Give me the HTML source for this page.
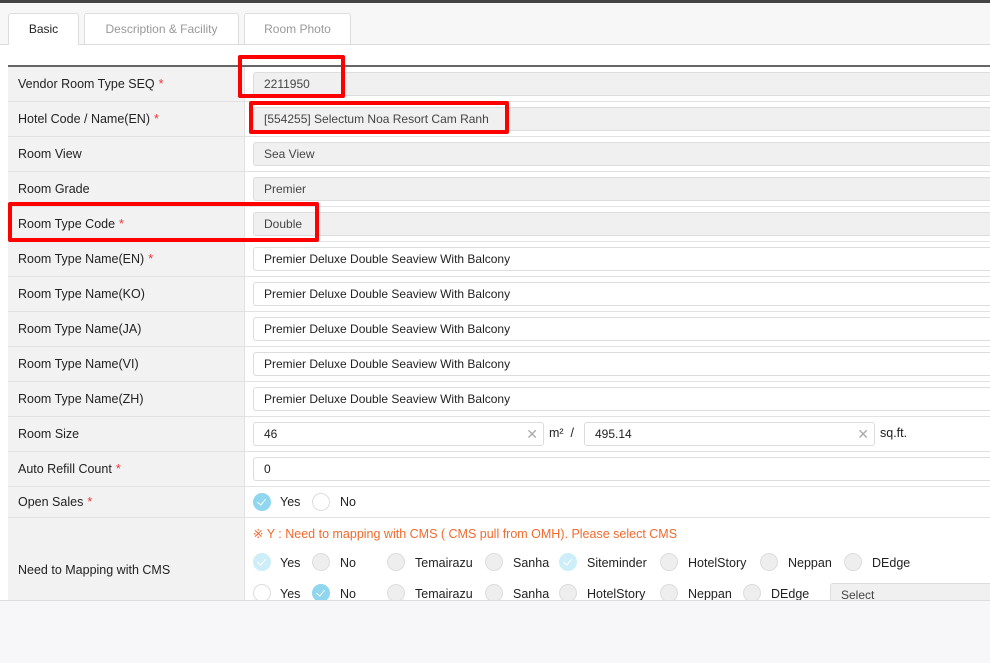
<!DOCTYPE html><html><head><style>
body{margin:0;width:990px;height:662px;overflow:hidden;background:#f7f7f9;font-family:"Liberation Sans",sans-serif;font-size:12.5px;color:#222;position:relative}
.top{position:absolute;left:0;top:0;width:990px;height:3px;background:#444}
.hdr{position:absolute;left:0;top:3px;width:990px;height:41px;background:#f7f7f7;border-bottom:1px solid #ddd}
.tab{position:absolute;top:13px;height:31px;border:1px solid #ddd;border-bottom:none;border-radius:3px 3px 0 0;background:#fff;text-align:center;line-height:30px;color:#999;font-size:12px;box-sizing:border-box}
.main{position:absolute;left:0;top:45px;width:990px;height:555px;background:#fff}
.tbl{position:absolute;left:8px;top:65px;width:982px;border-top:2px solid #666}
.row{position:relative;height:34px;border-bottom:1px solid #e2e2e2}
.lab{position:absolute;left:0;top:0;bottom:0;width:237px;background:#f2f2f2;border-right:1px solid #e2e2e2;padding-left:10px;box-sizing:border-box;display:flex;align-items:center;font-size:12.5px}
.req{color:#e33;margin-left:4px}
.inp{position:absolute;left:245px;top:5px;height:24px;right:-5px;border:1px solid #ddd;border-radius:3px;box-sizing:border-box;padding-left:10px;line-height:22px;font-size:12px;color:#222;background:#fff}
.ro{background:#f0f0f0;color:#444}
.rad{position:absolute;width:18px;height:18px;border-radius:50%;border:1px solid #ddd;box-sizing:border-box;background:#fff}
.on{background:#8fd6ee;border-color:#8fd6ee}
.on::after{content:"";position:absolute;left:5px;top:3px;width:4px;height:7px;border:solid #fff;border-width:0 1.5px 1.5px 0;transform:rotate(40deg)}
.dis{background:#eee}
.don{background:#cdeef8;border-color:#cdeef8}
.don::after{content:"";position:absolute;left:5px;top:3px;width:4px;height:7px;border:solid #fff;border-width:0 1.5px 1.5px 0;transform:rotate(40deg)}
.t{position:absolute;font-size:12.5px;color:#222}
.red{position:absolute;border:4px solid #f00;box-sizing:border-box;border-radius:2px}
</style></head><body>
<div class="top"></div><div class="hdr"></div>
<div class="tab" style="left:8px;width:71px;color:#222;height:32px">Basic</div>
<div class="tab" style="left:84px;width:155px">Description &amp; Facility</div>
<div class="tab" style="left:244px;width:107px">Room Photo</div>
<div class="main"></div>
<div class="tbl">
<div class="row"><div class="lab">Vendor Room Type SEQ<span class="req">*</span></div><div class="inp ro">2211950</div></div>
<div class="row"><div class="lab">Hotel Code / Name(EN)<span class="req">*</span></div><div class="inp ro">[554255] Selectum Noa Resort Cam Ranh</div></div>
<div class="row"><div class="lab">Room View</div><div class="inp ro">Sea View</div></div>
<div class="row"><div class="lab">Room Grade</div><div class="inp ro">Premier</div></div>
<div class="row"><div class="lab">Room Type Code<span class="req">*</span></div><div class="inp ro">Double</div></div>
<div class="row"><div class="lab">Room Type Name(EN)<span class="req">*</span></div><div class="inp">Premier Deluxe Double Seaview With Balcony</div></div>
<div class="row"><div class="lab">Room Type Name(KO)</div><div class="inp">Premier Deluxe Double Seaview With Balcony</div></div>
<div class="row"><div class="lab">Room Type Name(JA)</div><div class="inp">Premier Deluxe Double Seaview With Balcony</div></div>
<div class="row"><div class="lab">Room Type Name(VI)</div><div class="inp">Premier Deluxe Double Seaview With Balcony</div></div>
<div class="row"><div class="lab">Room Type Name(ZH)</div><div class="inp">Premier Deluxe Double Seaview With Balcony</div></div>
<div class="row"><div class="lab">Room Size</div>
<div class="inp" style="right:auto;width:291px">46<span style="position:absolute;right:5px;color:#aaa;font-size:14px">✕</span></div>
<span class="t" style="left:541px;top:9px">m² &nbsp;/</span>
<div class="inp" style="left:576px;right:auto;width:291px">495.14<span style="position:absolute;right:5px;color:#aaa;font-size:14px">✕</span></div>
<span class="t" style="left:872px;top:9px">sq.ft.</span></div>
<div class="row"><div class="lab">Auto Refill Count<span class="req">*</span></div><div class="inp">0</div></div>
<div class="row" style="height:30px"><div class="lab">Open Sales<span class="req">*</span></div>
<div class="rad on" style="left:245px;top:6px"></div><span class="t" style="left:272px;top:8px">Yes</span>
<div class="rad" style="left:304px;top:6px"></div><span class="t" style="left:332px;top:8px">No</span></div>
<div class="row" style="height:104px;border-bottom:none"><div class="lab">Need to Mapping with CMS</div>
<span class="t" style="left:245px;top:8px;color:#f26a2e">※ Y : Need to mapping with CMS ( CMS pull from OMH). Please select CMS</span>
<div class="rad don" style="left:245px;top:35px"></div><span class="t" style="left:272px;top:38px">Yes</span>
<div class="rad dis" style="left:304px;top:35px"></div><span class="t" style="left:332px;top:38px">No</span>
<div class="rad dis" style="left:379px;top:35px"></div><span class="t" style="left:407px;top:38px">Temairazu</span>
<div class="rad dis" style="left:477px;top:35px"></div><span class="t" style="left:505px;top:38px">Sanha</span>
<div class="rad don" style="left:551px;top:35px"></div><span class="t" style="left:579px;top:38px">Siteminder</span>
<div class="rad dis" style="left:652px;top:35px"></div><span class="t" style="left:680px;top:38px">HotelStory</span>
<div class="rad dis" style="left:752px;top:35px"></div><span class="t" style="left:780px;top:38px">Neppan</span>
<div class="rad dis" style="left:836px;top:35px"></div><span class="t" style="left:864px;top:38px">DEdge</span>
<div class="rad" style="left:245px;top:66px"></div><span class="t" style="left:272px;top:69px">Yes</span>
<div class="rad on" style="left:304px;top:66px"></div><span class="t" style="left:332px;top:69px">No</span>
<div class="rad dis" style="left:379px;top:66px"></div><span class="t" style="left:407px;top:69px">Temairazu</span>
<div class="rad dis" style="left:477px;top:66px"></div><span class="t" style="left:505px;top:69px">Sanha</span>
<div class="rad dis" style="left:551px;top:66px"></div><span class="t" style="left:579px;top:69px">HotelStory</span>
<div class="rad dis" style="left:652px;top:66px"></div><span class="t" style="left:680px;top:69px">Neppan</span>
<div class="rad dis" style="left:735px;top:66px"></div><span class="t" style="left:763px;top:69px">DEdge</span>
<div class="inp ro" style="left:822px;top:65px;font-size:12px">Select</div>
</div>
</div>
<div style="position:absolute;left:0;top:600px;width:990px;height:62px;background:#f7f7f9;border-top:1px solid #ddd"></div>
<div class="red" style="left:238px;top:55px;width:107px;height:43px"></div>
<div class="red" style="left:249px;top:101px;width:260px;height:33px"></div>
<div class="red" style="left:8px;top:202px;width:311px;height:40px"></div>
</body></html>
